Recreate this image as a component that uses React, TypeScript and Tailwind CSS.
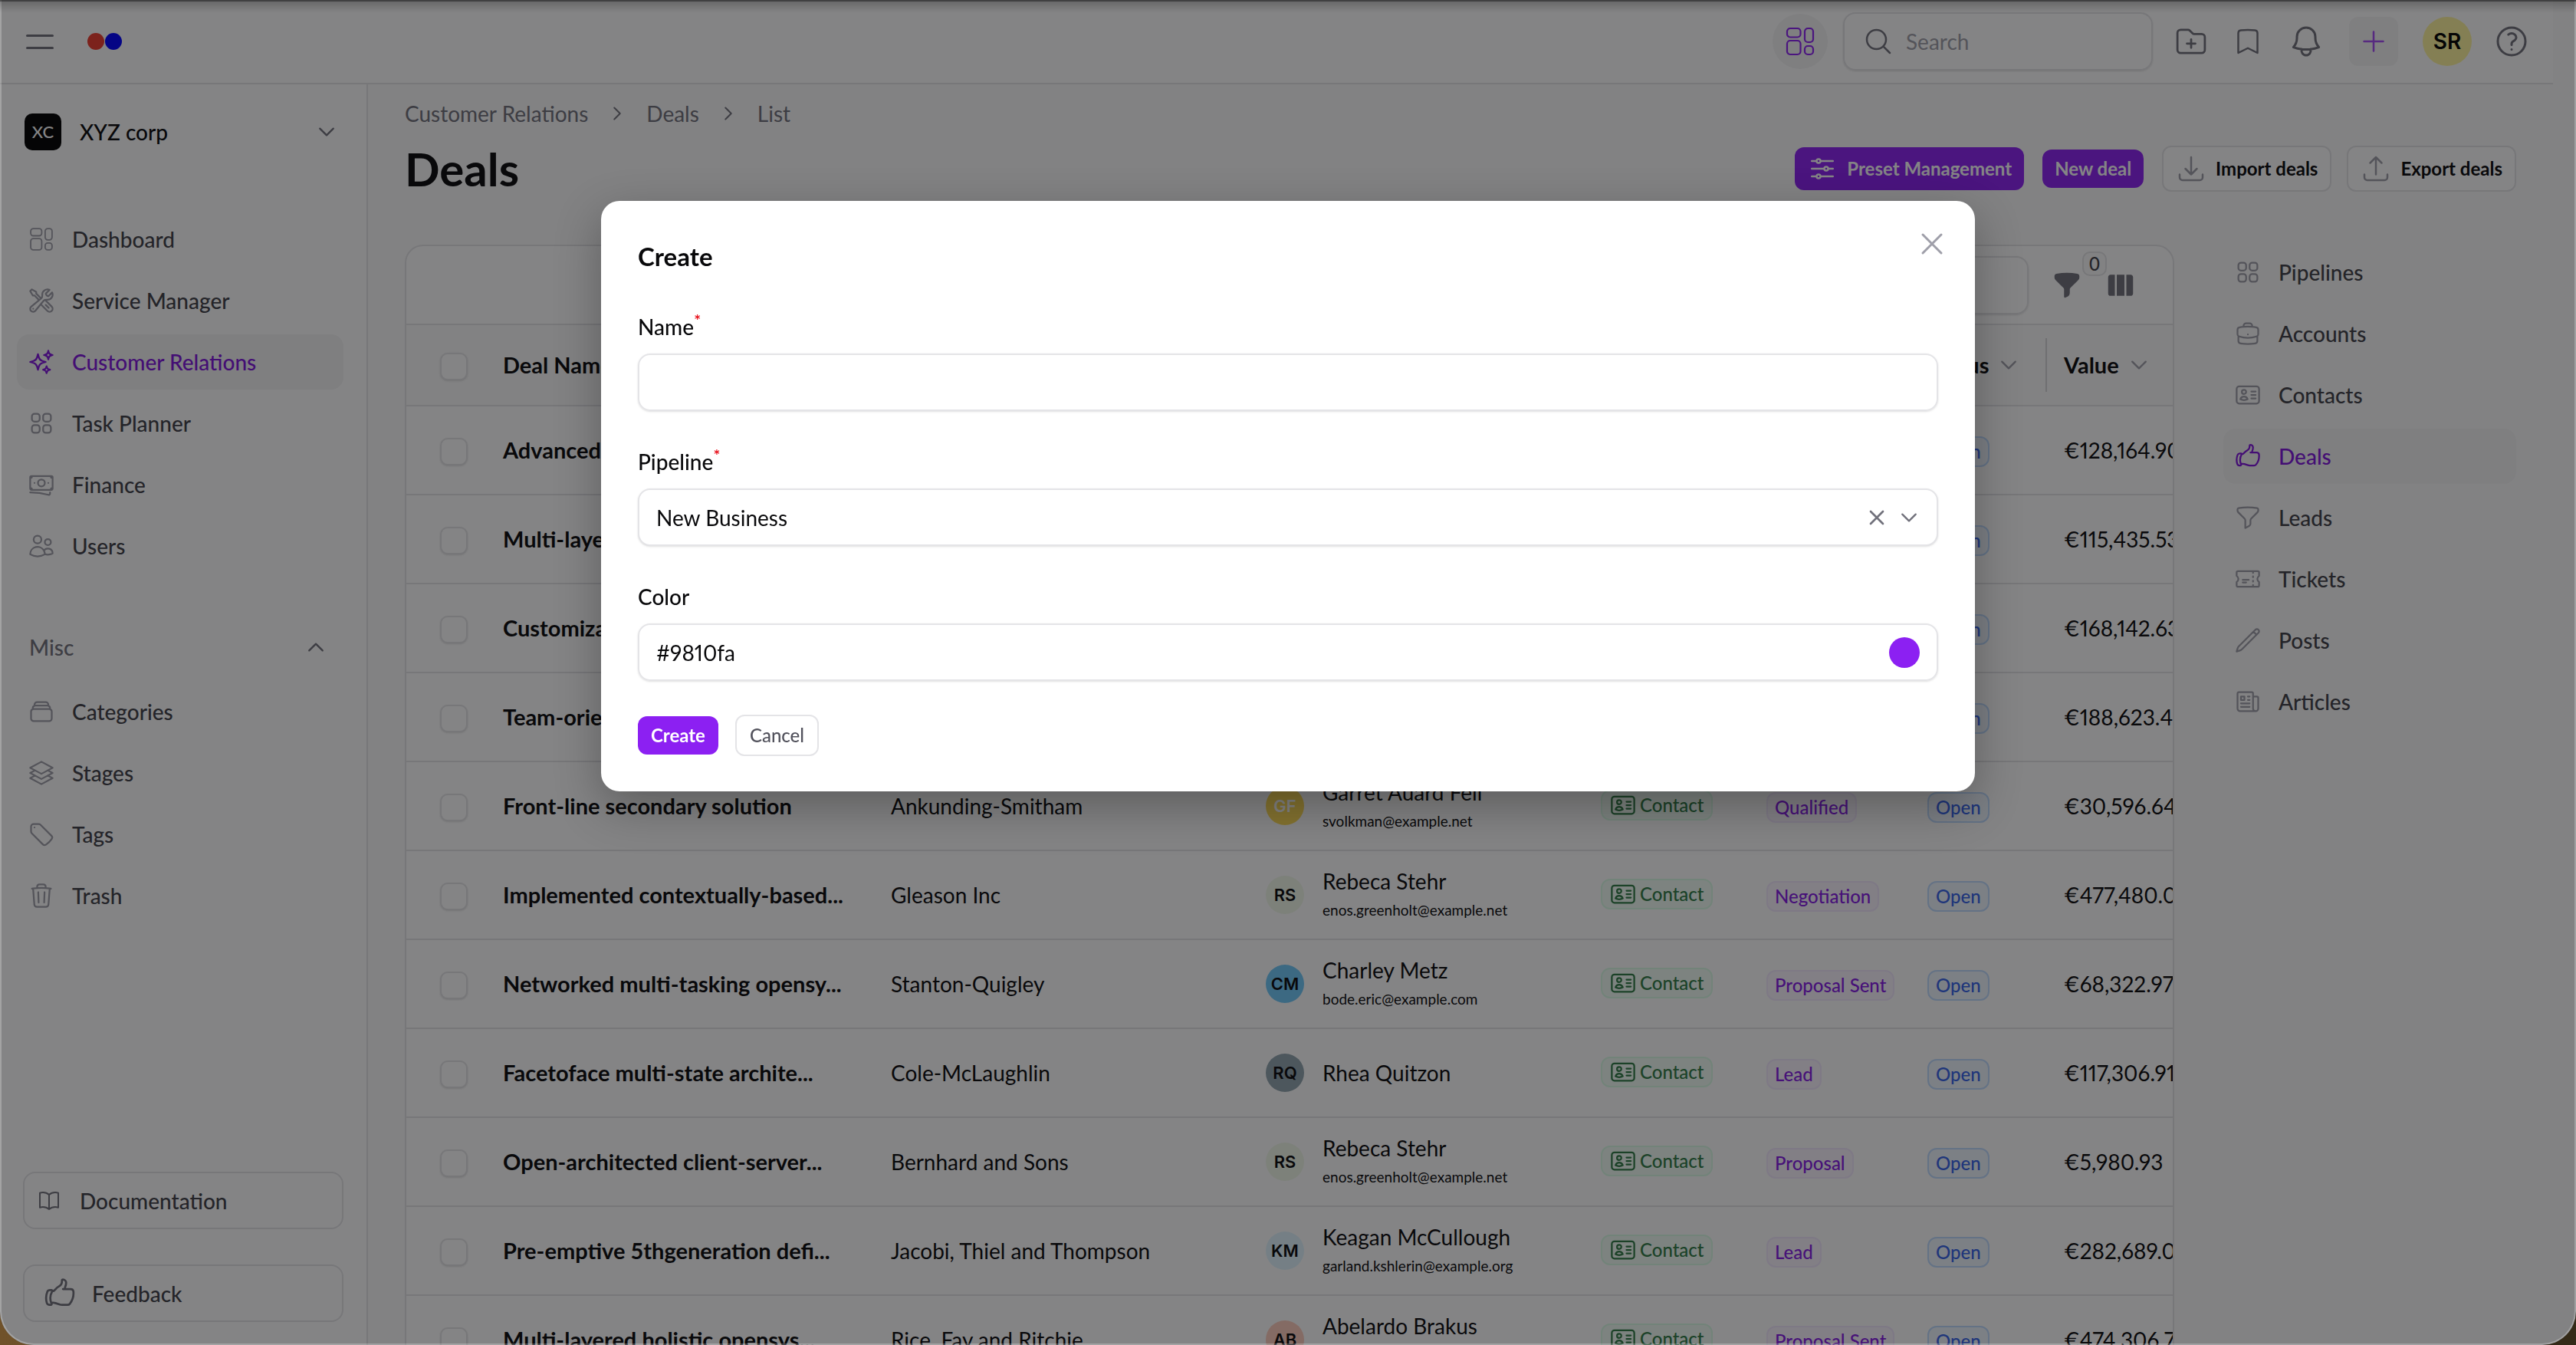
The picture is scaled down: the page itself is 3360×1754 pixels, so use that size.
import type { ReactNode } from "react";
import type { IconType } from "react-icons";
import {
  HiFunnel,
  HiOutlineAdjustmentsHorizontal,
  HiOutlineArrowDownTray,
  HiOutlineArrowUpTray,
  HiOutlineBanknotes,
  HiOutlineBell,
  HiOutlineBookOpen,
  HiOutlineBookmark,
  HiOutlineBriefcase,
  HiOutlineChevronDown,
  HiOutlineChevronRight,
  HiOutlineChevronUp,
  HiOutlineFolderPlus,
  HiOutlineFunnel,
  HiOutlineHandThumbUp,
  HiOutlineIdentification,
  HiOutlineMagnifyingGlass,
  HiOutlineNewspaper,
  HiOutlinePencil,
  HiOutlinePlus,
  HiOutlineQuestionMarkCircle,
  HiOutlineRectangleStack,
  HiOutlineSparkles,
  HiOutlineSquare3Stack3D,
  HiOutlineSquares2X2,
  HiOutlineTag,
  HiOutlineTicket,
  HiOutlineTrash,
  HiOutlineUsers,
  HiOutlineWrenchScrewdriver,
  HiOutlineXMark,
  HiViewColumns,
} from "react-icons/hi2";

type NavEntry = {
  label: string;
  icon: IconType | typeof WidgetIcon;
  active?: boolean;
};

type Deal = {
  name: string;
  company: string;
  initials: string;
  avatar: string;
  contact: string;
  email?: string;
  stage: string;
  value: string;
};

function WidgetIcon({ className }: { className?: string }) {
  return (
    <svg
      viewBox="-4 -4 44 44"
      fill="none"
      stroke="currentColor"
      strokeWidth="2.2"
      className={className}
    >
      <rect x="1" y="1" width="17.5" height="11.5" rx="4" />
      <rect x="24" y="1" width="11" height="18" rx="4" />
      <rect x="1" y="17" width="17.5" height="18" rx="4" />
      <rect x="24" y="24" width="11" height="11" rx="4" />
    </svg>
  );
}

const mainNav: NavEntry[] = [
  { label: "Dashboard", icon: WidgetIcon },
  { label: "Service Manager", icon: HiOutlineWrenchScrewdriver },
  { label: "Customer Relations", icon: HiOutlineSparkles, active: true },
  { label: "Task Planner", icon: HiOutlineSquares2X2 },
  { label: "Finance", icon: HiOutlineBanknotes },
  { label: "Users", icon: HiOutlineUsers },
];

const miscNav: NavEntry[] = [
  { label: "Categories", icon: HiOutlineRectangleStack },
  { label: "Stages", icon: HiOutlineSquare3Stack3D },
  { label: "Tags", icon: HiOutlineTag },
  { label: "Trash", icon: HiOutlineTrash },
];

const moduleNav: NavEntry[] = [
  { label: "Pipelines", icon: HiOutlineSquares2X2 },
  { label: "Accounts", icon: HiOutlineBriefcase },
  { label: "Contacts", icon: HiOutlineIdentification },
  { label: "Deals", icon: HiOutlineHandThumbUp, active: true },
  { label: "Leads", icon: HiOutlineFunnel },
  { label: "Tickets", icon: HiOutlineTicket },
  { label: "Posts", icon: HiOutlinePencil },
  { label: "Articles", icon: HiOutlineNewspaper },
];

const deals: Deal[] = [
  {
    name: "Advanced solution",
    company: "Gleason Inc",
    initials: "RS",
    avatar: "bg-[#f1f8e9]",
    contact: "Rebeca Stehr",
    stage: "Lead",
    value: "€128,164.90",
  },
  {
    name: "Multi-layered solution",
    company: "Stanton-Quigley",
    initials: "CM",
    avatar: "bg-[#6fc8f8]",
    contact: "Charley Metz",
    stage: "Proposal",
    value: "€115,435.53",
  },
  {
    name: "Customizable solution",
    company: "Cole-McLaughlin",
    initials: "RQ",
    avatar: "bg-[#90a4ae]",
    contact: "Rhea Quitzon",
    stage: "Lead",
    value: "€168,142.63",
  },
  {
    name: "Team-oriented solution",
    company: "Bernhard and Sons",
    initials: "RS",
    avatar: "bg-[#f1f8e9]",
    contact: "Rebeca Stehr",
    stage: "Qualified",
    value: "€188,623.45",
  },
  {
    name: "Front-line secondary solution",
    company: "Ankunding-Smitham",
    initials: "GF",
    avatar: "bg-[#ffdc55] text-white",
    contact: "Garret Auard Feil",
    email: "svolkman@example.net",
    stage: "Qualified",
    value: "€30,596.64",
  },
  {
    name: "Implemented contextually-based...",
    company: "Gleason Inc",
    initials: "RS",
    avatar: "bg-[#f1f8e9]",
    contact: "Rebeca Stehr",
    email: "enos.greenholt@example.net",
    stage: "Negotiation",
    value: "€477,480.00",
  },
  {
    name: "Networked multi-tasking opensy...",
    company: "Stanton-Quigley",
    initials: "CM",
    avatar: "bg-[#6fc8f8]",
    contact: "Charley Metz",
    email: "bode.eric@example.com",
    stage: "Proposal Sent",
    value: "€68,322.97",
  },
  {
    name: "Facetoface multi-state archite...",
    company: "Cole-McLaughlin",
    initials: "RQ",
    avatar: "bg-[#90a4ae]",
    contact: "Rhea Quitzon",
    stage: "Lead",
    value: "€117,306.91",
  },
  {
    name: "Open-architected client-server...",
    company: "Bernhard and Sons",
    initials: "RS",
    avatar: "bg-[#f1f8e9]",
    contact: "Rebeca Stehr",
    email: "enos.greenholt@example.net",
    stage: "Proposal",
    value: "€5,980.93",
  },
  {
    name: "Pre-emptive 5thgeneration defi...",
    company: "Jacobi, Thiel and Thompson",
    initials: "KM",
    avatar: "bg-[#e1f5fe]",
    contact: "Keagan McCullough",
    email: "garland.kshlerin@example.org",
    stage: "Lead",
    value: "€282,689.00",
  },
  {
    name: "Multi-layered holistic opensys...",
    company: "Rice, Fay and Ritchie",
    initials: "AB",
    avatar: "bg-[#ffccbc]",
    contact: "Abelardo Brakus",
    email: "abelardo.brakus@example.com",
    stage: "Proposal Sent",
    value: "€474,306.70",
  },
];

const columns = ["Company", "Contact", "Type", "Stage", "Status", "Value"];

function NavItem({ item }: { item: NavEntry }) {
  const Icon = item.icon;
  return (
    <li>
      <a
        href="#"
        className={
          item.active
            ? "flex h-[72px] items-center gap-[22px] rounded-2xl bg-zinc-100 px-[14px] font-medium text-[#7f13dc]"
            : "flex h-[72px] items-center gap-[22px] rounded-2xl px-[14px] font-medium text-zinc-700"
        }
      >
        <Icon
          className={item.active ? "size-9" : "size-9 text-zinc-400"}
        />
        {item.label}
      </a>
    </li>
  );
}

function Topbar() {
  return (
    <header className="mr-[30px] flex h-[110px] shrink-0 items-center border-b-2 border-zinc-200 bg-white pr-[30px] pl-[34px] text-zinc-500">
      <button aria-label="Toggle menu" className="flex w-9 flex-col gap-[13px]">
        <span className="h-[3px] rounded bg-zinc-500" />
        <span className="h-[3px] rounded bg-zinc-500" />
      </button>
      <a href="#" aria-label="Home" className="ml-11 flex gap-px">
        <span className="size-[22px] rounded-full bg-[#ee3a2c]" />
        <span className="size-[22px] rounded-full bg-[#0000ff]" />
      </a>
      <div className="ml-auto flex items-center">
        <button
          aria-label="Widgets"
          className="flex size-[72px] items-center justify-center rounded-full bg-zinc-100 text-[#8c20f2]"
        >
          <WidgetIcon className="size-11" />
        </button>
        <label className="ml-5 flex h-[76px] w-[404px] items-center gap-4 rounded-2xl border-2 border-zinc-200 px-6 shadow-sm">
          <HiOutlineMagnifyingGlass className="size-10 shrink-0" />
          <input
            type="search"
            placeholder="Search"
            aria-label="Search"
            className="w-full min-w-0 outline-none placeholder:text-zinc-400"
          />
        </label>
        <button aria-label="New folder" className="ml-7">
          <HiOutlineFolderPlus className="size-11" />
        </button>
        <button aria-label="Bookmarks" className="ml-8">
          <HiOutlineBookmark className="size-10" />
        </button>
        <button aria-label="Notifications" className="ml-8">
          <HiOutlineBell className="size-12" />
        </button>
        <button
          aria-label="Add"
          className="ml-8 flex size-16 items-center justify-center rounded-xl bg-zinc-100 text-[#a44af5]"
        >
          <HiOutlinePlus className="size-10" />
        </button>
        <button className="ml-8 flex size-16 items-center justify-center rounded-full bg-[#fff59d] font-[Inter] text-[28px] font-semibold text-black">
          SR
        </button>
        <button aria-label="Help" className="ml-7">
          <HiOutlineQuestionMarkCircle className="size-12" />
        </button>
      </div>
    </header>
  );
}

function Sidebar() {
  return (
    <aside className="flex w-[480px] shrink-0 flex-col border-r-2 border-zinc-200 bg-white pr-[30px] pb-[30px] pl-[22px]">
      <button className="mt-[38px] flex h-12 items-center pr-2 pl-[10px] font-medium">
        <span className="flex size-12 items-center justify-center rounded-[10px] bg-black text-[22px] text-white">
          XC
        </span>
        <span className="ml-6">XYZ corp</span>
        <HiOutlineChevronDown className="ml-auto size-7 stroke-2 text-zinc-500" />
      </button>
      <ul className="mt-20 flex flex-col gap-2">
        {mainNav.map((item) => (
          <NavItem key={item.label} item={item} />
        ))}
      </ul>
      <button className="mt-[60px] flex h-[72px] items-center justify-between pr-[22px] pl-4 font-medium text-zinc-500">
        Misc
        <HiOutlineChevronUp className="size-7 stroke-2" />
      </button>
      <ul className="mt-3 flex flex-col gap-2">
        {miscNav.map((item) => (
          <NavItem key={item.label} item={item} />
        ))}
      </ul>
      <div className="mt-auto flex flex-col gap-[46px] pl-2 font-medium text-zinc-700">
        <a
          href="#"
          className="flex h-[75px] items-center gap-6 rounded-2xl border-2 border-zinc-200 px-4"
        >
          <HiOutlineBookOpen className="size-8 text-zinc-500" />
          Documentation
        </a>
        <a
          href="#"
          className="flex h-[75px] items-center gap-5 rounded-2xl border-2 border-zinc-200 px-6"
        >
          <HiOutlineHandThumbUp className="size-11 text-zinc-500" />
          Feedback
        </a>
      </div>
    </aside>
  );
}

function PageHeading() {
  return (
    <>
      <nav
        aria-label="Breadcrumb"
        className="flex h-10 items-center gap-[26px] text-zinc-500"
      >
        <a href="#">Customer Relations</a>
        <HiOutlineChevronRight className="size-6 stroke-2" />
        <a href="#">Deals</a>
        <HiOutlineChevronRight className="size-6 stroke-2" />
        <span>List</span>
      </nav>
      <div className="mt-4 flex h-[72px] items-center">
        <h1 className="text-[60px] leading-[72px] font-bold">Deals</h1>
        <div className="ml-auto flex items-center text-[24px] font-bold">
          <button className="flex h-14 items-center gap-3 rounded-xl bg-[#8c20f2] px-4 text-white">
            <HiOutlineAdjustmentsHorizontal className="size-10" />
            Preset Management
          </button>
          <button className="ml-6 h-[50px] rounded-xl bg-[#8c20f2] px-4 text-white">
            New deal
          </button>
          <button className="ml-6 flex h-[60px] items-center gap-3 rounded-xl border-2 border-zinc-200 bg-white px-4">
            <HiOutlineArrowDownTray className="size-10 text-zinc-400" />
            Import deals
          </button>
          <button className="ml-5 flex h-[60px] items-center gap-3 rounded-xl border-2 border-zinc-200 bg-white px-4">
            <HiOutlineArrowUpTray className="size-10 text-zinc-400" />
            Export deals
          </button>
        </div>
      </div>
    </>
  );
}

function Checkbox({ label }: { label: string }) {
  return (
    <input
      type="checkbox"
      aria-label={label}
      className="mt-1 ml-11 block size-9 appearance-none rounded-[10px] border-2 border-zinc-200 bg-white shadow-sm"
    />
  );
}

function Badge({ tone, children }: { tone: string; children: ReactNode }) {
  return (
    <span
      className={`mt-1 inline-flex h-10 items-center gap-1 rounded-xl border-2 px-[9px] text-[24px] font-medium ${tone}`}
    >
      {children}
    </span>
  );
}

function DealsTable() {
  return (
    <section className="min-w-0 flex-1 overflow-hidden rounded-3xl border-2 border-zinc-200 bg-white">
      <div className="flex h-[103px] items-center justify-end gap-[30px] border-b-2 border-zinc-200 pr-12 text-zinc-500">
        <input
          type="search"
          aria-label="Search deals"
          className="h-[76px] w-[480px] rounded-2xl border-2 border-zinc-200 px-6 shadow-sm outline-none"
        />
        <button aria-label="Filter" className="relative">
          <HiFunnel className="size-10" />
          <span className="absolute -top-6 left-10 flex h-8 w-8 items-center justify-center rounded-[10px] border-2 border-zinc-200 bg-zinc-50 text-[24px] leading-none font-medium text-zinc-700">
            0
          </span>
        </button>
        <button aria-label="Columns">
          <HiViewColumns className="size-10" />
        </button>
      </div>
      <table className="w-[2420px] table-fixed border-separate border-spacing-0 text-left">
        <colgroup>
          <col className="w-[126px]" />
          <col className="w-[506px]" />
          <col className="w-[489px]" />
          <col className="w-[437px]" />
          <col className="w-[216px]" />
          <col className="w-[210px]" />
          <col className="w-[178px]" />
          <col />
        </colgroup>
        <thead className="bg-zinc-50">
          <tr className="text-[29px]">
            <th className="h-[106px] border-b-2 border-zinc-200 font-normal">
              <Checkbox label="Select all" />
            </th>
            <th className="border-b-2 border-zinc-200 font-bold">Deal Name</th>
            {columns.map((column) => (
              <th
                key={column}
                className="border-b-2 border-zinc-200 font-bold"
              >
                <span className="flex items-center gap-3">
                  {column}
                  <HiOutlineChevronDown className="size-7 stroke-2 text-zinc-400" />
                  {column !== "Value" && (
                    <span className="mr-[22px] ml-auto h-[70px] w-0.5 bg-zinc-300" />
                  )}
                </span>
              </th>
            ))}
          </tr>
        </thead>
        <tbody className="[&_td]:h-[116px] [&_td]:border-b-2 [&_td]:border-zinc-200">
          {deals.map((deal) => (
            <tr key={deal.name}>
              <td>
                <Checkbox label={deal.name} />
              </td>
              <td className="text-[29px] font-bold">{deal.name}</td>
              <td>{deal.company}</td>
              <td>
                <div className="flex items-center gap-6">
                  <span
                    className={`flex size-[50px] items-center justify-center rounded-full font-[Inter] text-[22px] font-semibold ${deal.avatar}`}
                  >
                    {deal.initials}
                  </span>
                  <div>
                    <p className="leading-10">{deal.contact}</p>
                    {deal.email && (
                      <p className="text-[19px] leading-9">{deal.email}</p>
                    )}
                  </div>
                </div>
              </td>
              <td>
                <Badge tone="border-green-100 bg-green-50 text-[#2f7a45]">
                  <HiOutlineIdentification className="size-9" />
                  Contact
                </Badge>
              </td>
              <td>
                <Badge tone="border-purple-100 bg-purple-50 text-[#8418e4]">
                  {deal.stage}
                </Badge>
              </td>
              <td>
                <Badge tone="border-blue-200 bg-blue-50 text-[#3563e9]">
                  Open
                </Badge>
              </td>
              <td className="proportional-nums">{deal.value}</td>
            </tr>
          ))}
        </tbody>
      </table>
    </section>
  );
}

function CreateModal() {
  return (
    <div className="fixed inset-0 flex items-start justify-center bg-zinc-950/50 pt-[262px]">
      <form
        role="dialog"
        aria-labelledby="create-title"
        className="relative w-[1792px] rounded-3xl bg-white px-12 pt-12 pb-[46px] shadow-[0_20px_60px_rgba(0,0,0,0.3)]"
      >
        <button
          type="button"
          aria-label="Close"
          className="absolute top-8 right-8 text-zinc-400"
        >
          <HiOutlineXMark className="size-12" />
        </button>
        <h2
          id="create-title"
          className="text-[33px] leading-[48px] font-bold"
        >
          Create
        </h2>
        <div className="mt-12 flex flex-col gap-[46px]">
          <div>
            <label htmlFor="name" className="block h-10 leading-10 font-medium">
              Name<sup className="text-[22px] text-red-600">*</sup>
            </label>
            <input
              id="name"
              type="text"
              className="mt-[15px] block h-[75px] w-full rounded-2xl border-2 border-zinc-200 px-6 shadow-sm outline-none"
            />
          </div>
          <div>
            <label
              htmlFor="pipeline"
              className="block h-10 leading-10 font-medium"
            >
              Pipeline<sup className="text-[22px] text-red-600">*</sup>
            </label>
            <div className="relative mt-[15px]">
              <select
                id="pipeline"
                className="block h-[75px] w-full appearance-none rounded-2xl border-2 border-zinc-200 bg-white px-[22px] shadow-sm outline-none"
              >
                <option>New Business</option>
              </select>
              <div className="absolute inset-y-0 right-6 flex items-center gap-3 text-zinc-500">
                <button type="button" aria-label="Clear pipeline">
                  <HiOutlineXMark className="size-8 stroke-2" />
                </button>
                <HiOutlineChevronDown className="pointer-events-none size-7 stroke-2" />
              </div>
            </div>
          </div>
          <div>
            <label
              htmlFor="color"
              className="block h-10 leading-10 font-medium"
            >
              Color
            </label>
            <div className="mt-[15px] flex h-[75px] items-center rounded-2xl border-2 border-zinc-200 px-[22px] shadow-sm">
              <input
                id="color"
                type="text"
                defaultValue="#9810fa"
                className="min-w-0 flex-1 proportional-nums outline-none"
              />
              <button
                type="button"
                aria-label="Pick a color"
                className="size-10 rounded-full bg-[#8c20f2]"
              />
            </div>
          </div>
        </div>
        <div className="mt-11 flex items-center gap-[22px] text-[24px]">
          <button
            type="submit"
            className="h-[50px] rounded-xl bg-[#8c20f2] px-[17px] font-bold text-white"
          >
            Create
          </button>
          <button
            type="button"
            className="h-[54px] rounded-xl border-2 border-zinc-200 px-[17px] font-medium text-zinc-600"
          >
            Cancel
          </button>
        </div>
      </form>
    </div>
  );
}

export default function App() {
  return (
    <div className="h-screen bg-linear-to-r from-[#d69a48] to-[#5e4a24] font-[Lato,sans-serif] text-[28px] leading-10 text-zinc-950">
      <div className="relative flex h-full flex-col overflow-hidden rounded-b-[44px] bg-zinc-50">
        <Topbar />
        <div className="flex min-h-0 flex-1">
          <Sidebar />
          <main className="mr-[30px] min-w-0 flex-1 overflow-hidden px-12 pt-[18px]">
            <PageHeading />
            <div className="mt-[63px] flex items-start gap-16">
              <DealsTable />
              <nav aria-label="Modules" className="w-[382px] shrink-0">
                <ul className="flex flex-col gap-2">
                  {moduleNav.map((item) => (
                    <NavItem key={item.label} item={item} />
                  ))}
                </ul>
              </nav>
            </div>
          </main>
        </div>
        <CreateModal />
        {/* window edge and the toolbar shadow above it */}
        <div className="pointer-events-none absolute inset-0 rounded-b-[44px] border-2 border-t-0 border-white/25" />
        <div className="pointer-events-none absolute inset-x-0 top-0 h-4 border-t-2 border-black/50 bg-linear-to-b from-black/20 to-transparent" />
      </div>
    </div>
  );
}
